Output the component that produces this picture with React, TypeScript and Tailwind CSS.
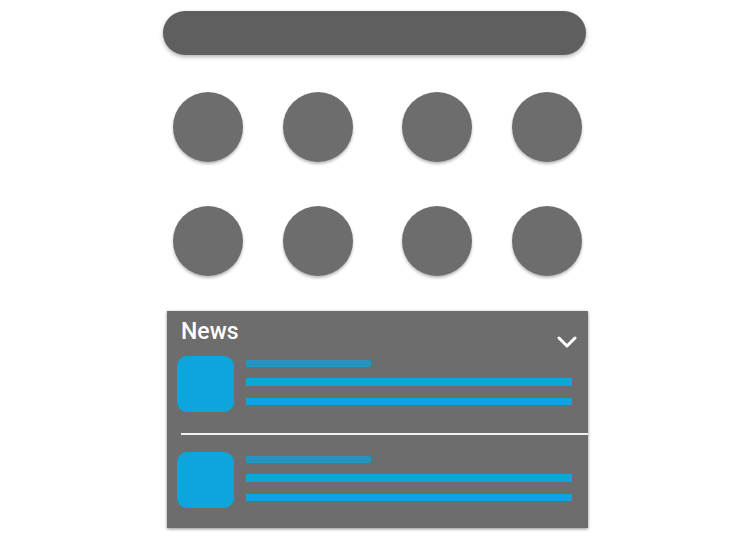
import React from 'react';

const ROWS = [0, 1];

function Circle({ className = '' }: { className?: string }) {
  return (
    <div className={`w-[70px] h-[70px] rounded-full bg-[#6d6d6d] shadow-[0_2px_3px_rgba(0,0,0,0.28)] ${className}`} />
  );
}

function NewsItem() {
  return (
    <div className="flex ml-[10px]">
      <div className="w-[57px] h-[56px] rounded-[10px] bg-[#0ea5dc]" />
      <div className="ml-[12px] pt-[4px] flex flex-col">
        <div className="w-[125px] h-[7px] bg-[#2493c0]" />
        <div className="w-[326px] h-[8px] bg-[#0ea5dc] mt-[11px]" />
        <div className="w-[326px] h-[7px] bg-[#0ea5dc] mt-[12px]" />
      </div>
    </div>
  );
}

export default function App() {
  return (
    <div className="w-[750px] h-[540px] bg-white overflow-hidden" style={{ fontFamily: 'Roboto, "Liberation Sans", sans-serif' }}>
      {/* search bar */}
      <div className="ml-[163px] mt-[11px] w-[423px] h-[44px] rounded-full bg-[#5f5f5f] shadow-[0_2px_4px_rgba(0,0,0,0.3)]" />

      {/* app grid */}
      {ROWS.map(r => (
        <div key={r} className={`flex ml-[173px] ${r === 0 ? 'mt-[37px]' : 'mt-[44px]'}`}>
          <Circle />
          <Circle className="ml-[40px]" />
          <Circle className="ml-[49px]" />
          <Circle className="ml-[40px]" />
        </div>
      ))}

      {/* news card */}
      <div className="ml-[167px] mt-[35px] w-[421px] h-[217px] bg-[#6d6d6d] shadow-[0_1px_3px_rgba(0,0,0,0.45)] flex flex-col">
        <div className="flex items-start justify-between h-[45px]">
          <div className="ml-[14px] mt-[8px] text-[23px] leading-[26px] font-medium text-white">News</div>
          <svg width="20" height="12" viewBox="0 0 20 12" className="mt-[25px] mr-[11px]">
            <polyline points="2,2 10,10 18,2" fill="none" stroke="white" strokeWidth="3" strokeLinecap="round" strokeLinejoin="round" />
          </svg>
        </div>
        <NewsItem />
        <div className="ml-[14px] mt-[21px] h-[1.5px] bg-white/90" />
        <div className="mt-[17px]">
          <NewsItem />
        </div>
      </div>
    </div>
  );
}
